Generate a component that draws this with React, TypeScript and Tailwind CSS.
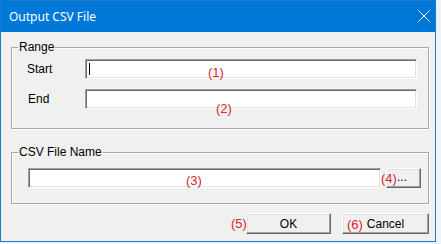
import React from 'react';

const ui = { fontFamily: '"Liberation Sans", Arial, sans-serif' };

const TextBox: React.FC<{ className?: string; caret?: boolean }> = ({ className = '', caret }) => (
  <div
    className={`relative bg-white border border-t-[#a0a0a0] border-l-[#a0a0a0] border-b-white border-r-white shadow-[inset_1px_1px_0_#696969,inset_-1px_-1px_0_#e3e3e3] ${className}`}
  >
    {caret && <div className="absolute left-[3px] top-[3px] w-px h-[12px] bg-black"></div>}
  </div>
);

const Button: React.FC<{ label: string; className?: string }> = ({ label, className = '' }) => (
  <button
    className={`flex items-center justify-center bg-[#f0f0f0] text-[12px] text-black border border-t-white border-l-white border-b-[#696969] border-r-[#696969] shadow-[inset_-1px_-1px_0_#a0a0a0,inset_1px_1px_0_#e3e3e3] ${className}`}
    style={ui}
  >
    {label}
  </button>
);

const Group: React.FC<{ title: string; className?: string; children: React.ReactNode }> = ({ title, className = '', children }) => (
  <fieldset className={`border border-[#a8a8a8] shadow-[1px_1px_0_#fff,inset_1px_1px_0_#fff] ${className}`}>
    <legend className="ml-[6px] px-[1px] text-[12px] leading-[14px] text-black" style={ui}>
      {title}
    </legend>
    {children}
  </fieldset>
);

const Mark: React.FC<{ n: number; className: string }> = ({ n, className }) => (
  <span className={`absolute text-[13px] leading-[15px] text-[#d9262b] ${className}`} style={ui}>
    ({n})
  </span>
);

export default function App() {
  return (
    <div className="relative w-[441px] h-[244px] bg-[#eef3f7] overflow-hidden">
      <div className="w-[436px] h-[242px] flex flex-col border border-[#1879cf]">
        {/* title bar */}
        <div className="h-[31px] bg-[#0078d7] flex items-center justify-between pl-[8px] pr-[5px]">
          <span className="text-white text-[12px]" style={{ fontFamily: '"Noto Sans", "Open Sans", sans-serif' }}>
            Output CSV File
          </span>
          <svg width="12" height="12" viewBox="0 0 12 12" className="mb-[1px]">
            <path d="M0.5 0.5L11.5 11.5M11.5 0.5L0.5 11.5" stroke="#fff" strokeWidth="1" />
          </svg>
        </div>

        {/* client area */}
        <div className="flex-1 bg-[#f0f0f0] flex flex-col pt-[8px] pl-[10px] pr-[6px]">
          <Group title="Range" className="w-[418px] h-[89px]">
            <div className="flex flex-col gap-[10px] pt-[5px] pl-[15px] text-[12px]" style={ui}>
              <div className="flex items-center">
                <span className="w-[58px]">Start</span>
                <TextBox className="w-[332px] h-[20px]" caret />
              </div>
              <div className="flex items-center">
                <span className="w-[58px] pl-px">End</span>
                <TextBox className="w-[332px] h-[20px]" />
              </div>
            </div>
          </Group>

          <Group title="CSV File Name" className="w-[418px] h-[59px] mt-[16px]">
            <div className="flex items-center gap-[5px] pt-[9px] pl-[16px]">
              <TextBox className="w-[353px] h-[20px]" />
              <Button label="..." className="w-[35px] h-[20px] pb-[2px] pl-[10px] !justify-start" />
            </div>
          </Group>

          <div className="flex justify-end gap-[11px] mt-[9px]">
            <Button label="OK" className="w-[85px] h-[21px]" />
            <Button label="Cancel" className="w-[87px] h-[21px]" />
          </div>
        </div>
      </div>

      <Mark n={1} className="left-[208px] top-[65px]" />
      <Mark n={2} className="left-[216px] top-[101px]" />
      <Mark n={3} className="left-[186px] top-[173px]" />
      <Mark n={4} className="left-[381px] top-[171px]" />
      <Mark n={5} className="left-[231px] top-[216px]" />
      <Mark n={6} className="left-[347px] top-[217px]" />
    </div>
  );
}
